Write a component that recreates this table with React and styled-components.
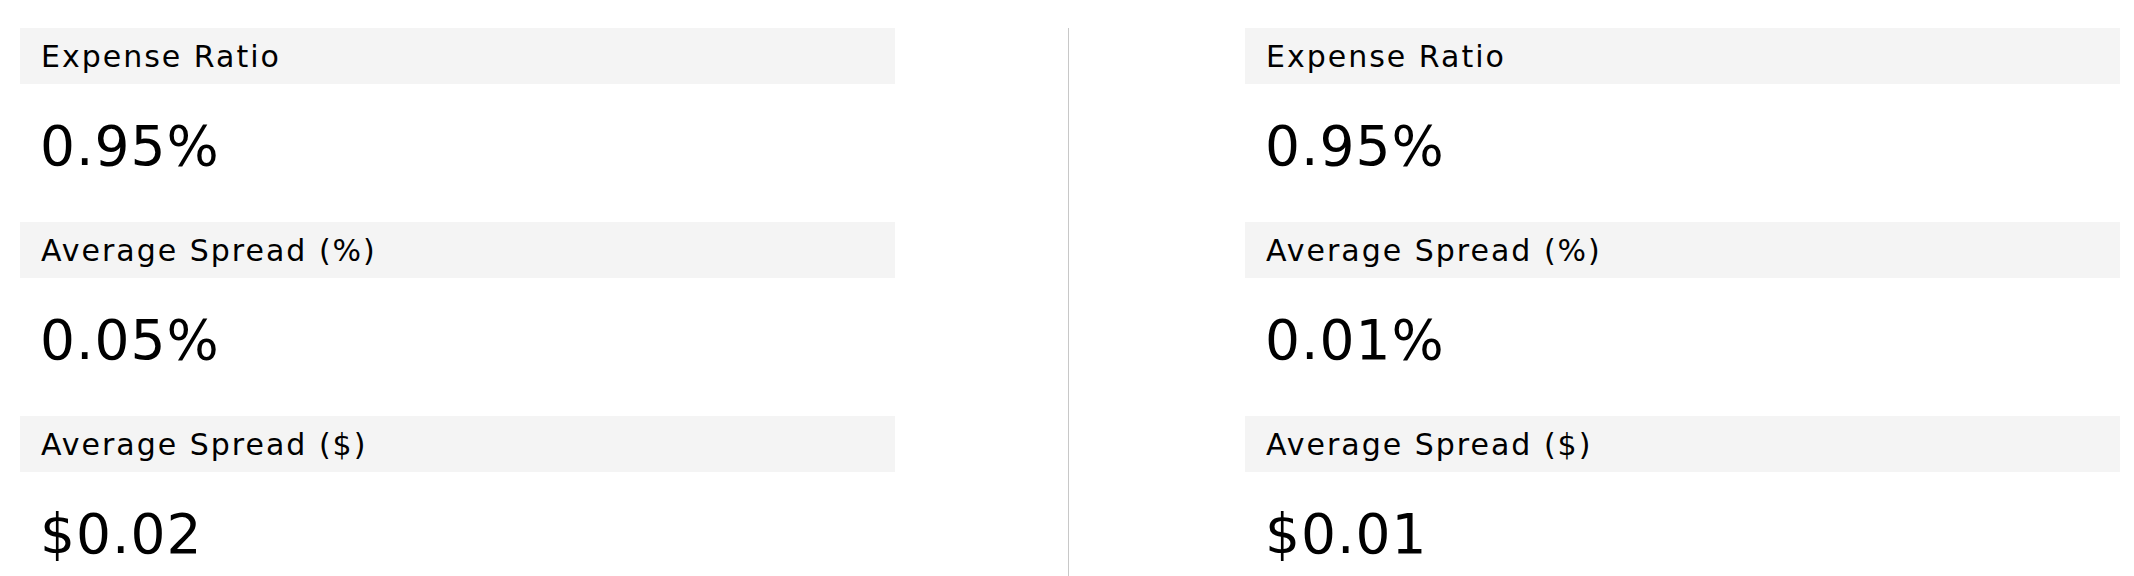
import React from "react";
import styled, { createGlobalStyle } from "styled-components";

const GlobalStyle = createGlobalStyle`
    body{
        margin: 0;
        background-color: #fff;
        font-family: "DejaVu Sans", "Liberation Sans", sans-serif;
        color: #000;
    }
`

const StyledCompare = styled.section`
    display: flex;
    align-items: stretch;
    height: 576px;
    padding: 28px 0 0 20px;
    box-sizing: border-box;
    overflow: hidden;
`
const Column = styled.div`
    display: flex;
    flex-direction: column;
    width: 875px;
    flex-shrink: 0;
`
const Divider = styled.div`
    width: 1px;
    background-color: #c8c8c8;
    margin: 0 176px 0 173px;
    flex-shrink: 0;
`
const Label = styled.div`
    background-color: #f4f4f4;
    height: 56px;
    flex-shrink: 0;
    display: flex;
    align-items: center;
    padding-left: 21px;
    font-size: 30px;
    letter-spacing: 2px;
`
const Value = styled.div`
    height: 138px;
    flex-shrink: 0;
    padding: 35px 0 0 20px;
    box-sizing: border-box;
    font-size: 55px;
    line-height: 1;
    letter-spacing: 1px;
`

const funds = [
    [
        { label: "Expense Ratio", value: "0.95%" },
        { label: "Average Spread (%)", value: "0.05%" },
        { label: "Average Spread ($)", value: "$0.02" },
    ],
    [
        { label: "Expense Ratio", value: "0.95%" },
        { label: "Average Spread (%)", value: "0.01%" },
        { label: "Average Spread ($)", value: "$0.01" },
    ],
]

const FundColumn = ({ rows }) => (
    <Column>
        {rows.map((row) => (
            <React.Fragment key={row.label}>
                <Label>{row.label}</Label>
                <Value>{row.value}</Value>
            </React.Fragment>
        ))}
    </Column>
)

const App = () => {
    return (
        <>
            <GlobalStyle />
            <StyledCompare>
                <FundColumn rows={funds[0]} />
                <Divider />
                <FundColumn rows={funds[1]} />
            </StyledCompare>
        </>
    )
}
export default App;
